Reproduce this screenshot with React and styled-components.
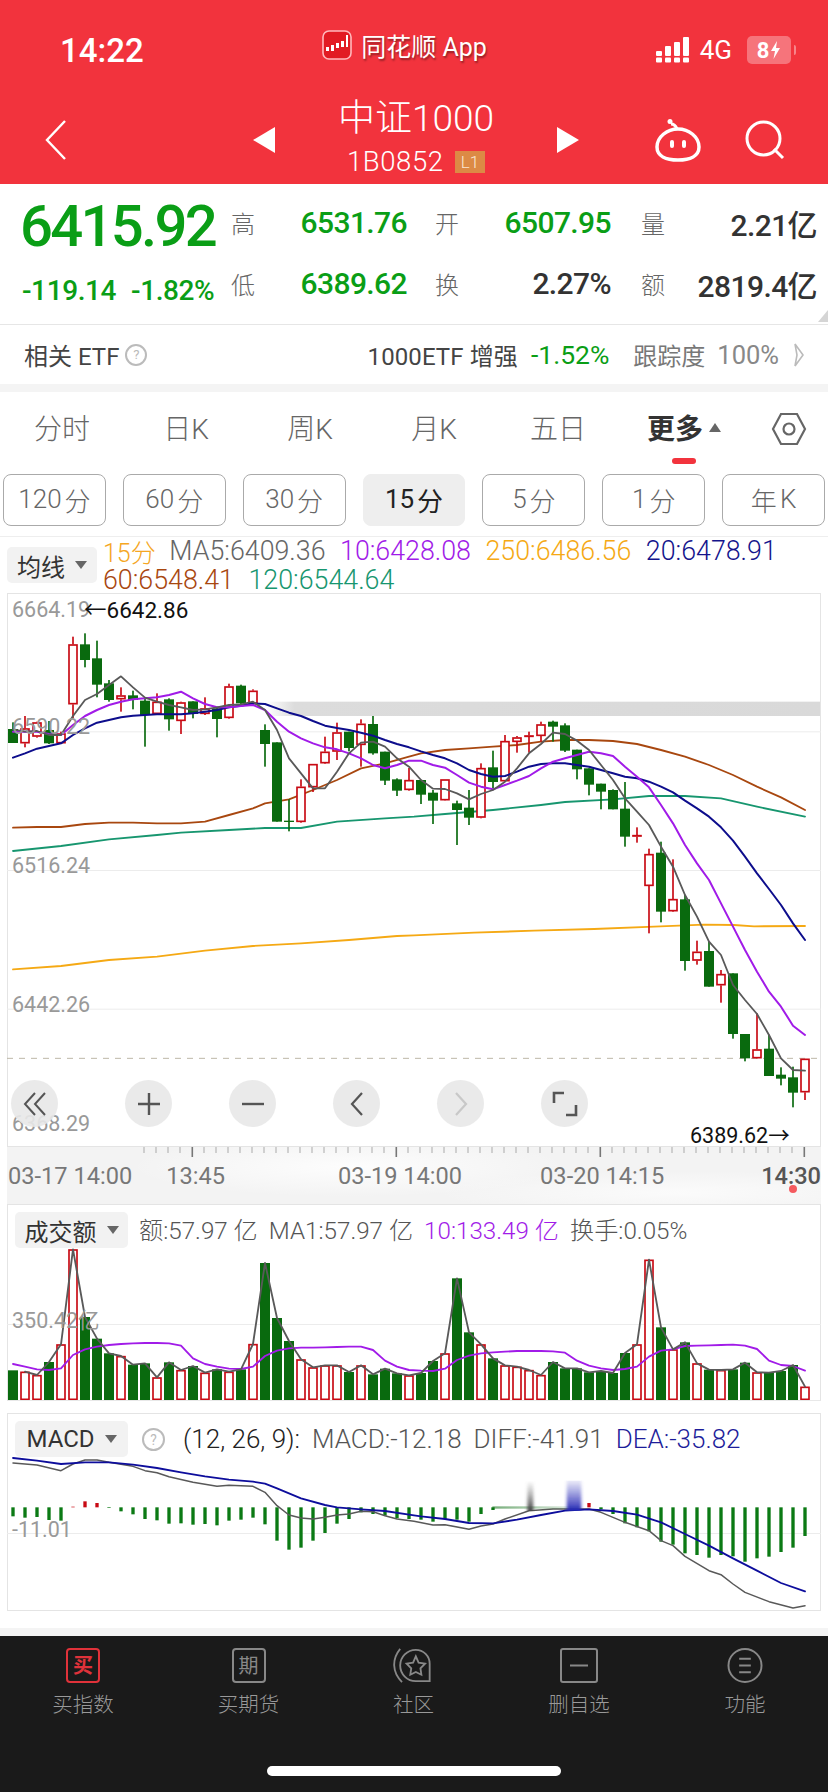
import React from "react";
import styled, { createGlobalStyle } from "styled-components";

const FONT = `Roboto, "Noto Sans CJK SC", sans-serif`;
const RED = "#f2333d";
const UP = "#0a9e16";

const Global = createGlobalStyle`
  html, body { margin: 0; padding: 0; background: #fff; }
  body { font-family: ${FONT}; }
  * { box-sizing: border-box; }
`;

/* ---------- data, in chart coordinates (3 units per pixel) ---------- */
const cx = (i) => 39 + 36 * i;
const candles = [
  ["g",397,417,459,459],["r",378,415,460,472],["r",395,397,440,443],["g",393,420,460,462],["r",425,430,460,462],
  ["r",140,163,343,385],["g",130,163,210,232],["g",152,205,284,322],["g",270,280,330,335],["r",292,316,328,365],
  ["g",302,316,330,358],["g",325,332,375,470],["r",310,335,372,375],["g",325,328,388,422],["r",335,337,393,432],
  ["g",334,334,372,385],["r",322,355,372,375],["g",352,355,387,442],["r",281,289,384,386],["g",284,287,340,345],
  ["r",298,302,342,345],["g",403,420,462,530],["g",457,457,695,695],["g",628,692,696,724],["r",568,590,696,698],
  ["r",522,522,592,606],["r",440,485,520,522],["r",398,427,485,510],["g",425,425,474,484],["r",388,401,465,530],
  ["g",378,402,490,494],["g",485,485,572,585],["g",565,568,602,618],["r",534,570,600,602],["g",570,570,614,642],
  ["g",600,608,632,702],["r",568,568,631,632],["g",632,640,660,765],["g",600,653,683,705],["r",520,534,683,685],
  ["g",482,532,576,596],["r",435,453,574,576],["r",438,442,456,488],["r",425,436,441,488],["r",395,403,438,455],
  ["g",392,395,410,455],["g",400,406,482,486],["g",479,479,538,568],["g",535,535,584,616],["g",581,581,605,658],
  ["g",598,600,658,658],["g",576,656,740,770],["r",712,735,740,758],["r",776,792,888,1030],["g",755,788,965,997],
  ["r",808,927,964,966],["g",915,928,1113,1142],["r",1052,1085,1112,1124],["g",1055,1083,1190,1190],["r",1140,1152,1186,1238],
  ["g",1150,1150,1332,1346],["g",1332,1332,1405,1414],["r",1270,1378,1405,1406],["g",1334,1376,1458,1458],["g",1432,1454,1466,1486],
  ["g",1430,1462,1508,1552],["r",1406,1406,1507,1530],
];
const byIndex = (ys) => ys.map((y, i) => [cx(i), y]);
const ma5 = byIndex([418,425,423,435,435,378,330,312,285,259,292,323,335,345,352,360,358,352,345,343,335,360,420,505,550,595,595,545,490,458,455,470,505,530,570,596,597,610,628,612,600,575,535,490,462,428,432,452,480,525,570,625,665,705,770,830,915,980,1055,1095,1185,1230,1272,1335,1405,1440,1442]);
const ma10 = byIndex([425,425,425,432,435,405,378,360,345,335,328,325,322,315,305,325,342,352,352,348,345,360,395,425,445,460,472,478,490,505,525,535,525,512,512,525,533,555,578,590,598,585,572,558,535,515,505,495,485,490,498,530,560,592,645,700,765,820,870,940,1010,1080,1145,1205,1250,1307,1335]);
const ma20 = byIndex([503,490,476,468,460,435,415,398,390,382,377,375,373,373,373,370,365,360,352,347,340,342,355,368,378,393,407,414,420,428,437,450,462,472,484,495,505,520,540,552,560,558,545,530,522,520,520,525,530,540,550,560,565,575,590,607,632,655,680,712,752,800,850,897,945,1000,1050]);
const R = 1242;
const ma60 = [[39,713],[111,711],[183,711],[255,702],[327,698],[399,698],[471,700],[543,700],[615,695],[687,675],[759,655],[795,640],[867,628],[939,600],[1011,570],[1083,535],[1155,520],[1227,500],[R+21,490],[R+93,480],[R+165,475],[R+237,470],[R+309,465],[R+381,455],[R+453,450],[R+525,450],[R+597,453],[R+669,462],[R+741,480],[R+813,500],[R+885,525],[R+957,555],[R+1029,590],[R+1101,622],[R+1173,660]];
const ma120 = [[39,783],[183,768],[327,748],[471,735],[543,728],[687,720],[795,714],[903,714],[1011,695],[1155,685],[1242,680],[R+93,672],[R+237,660],[R+381,645],[R+453,636],[R+597,628],[R+705,618],[R+813,618],[R+921,625],[R+1029,650],[R+1173,680]];
const ma250 = [[39,1138],[183,1128],[327,1110],[471,1100],[615,1082],[759,1068],[903,1060],[1047,1050],[1191,1038],[1242,1036],[R+180,1028],[R+360,1022],[R+540,1017],[R+720,1010],[R+870,1004],[R+960,1005],[R+1020,1009],[R+1173,1008]];

const volume = [
  ["g",541],["r",545],["r",555],["g",516],["r",463],["r",178],["g",381],["g",446],["g",490],["r",498],["g",524],["g",520],["r",562],["g",517],["r",540],["g",528],["r",548],["g",538],["r",545],["g",538],["r",462],["g",219],["g",384],["g",453],["r",508],["r",532],["r",526],["r",526],["g",546],["r",526],["g",553],["g",536],["g",550],["r",556],
  ["g",549],["g",513],["r",490],["g",265],["g",427],["r",463],["g",505],["r",526],["r",530],["r",540],["r",555],["g",516],["g",535],["g",535],["g",547],["g",543],["g",549],["g",489],["r",463],["r",209],["g",412],["r",478],["g",457],["r",520],["g",539],["r",540],["g",538],["g",518],["r",547],["g",548],["g",543],["g",525],["r",590],
];
const volMa1 = volume.map(([, y], i) => [cx(i), y]).slice(1);
const volMa10 = byIndex([522,530,538,540,535,495,478,470,465,462,460,459,459,460,467,505,522,530,536,537,530,498,482,475,473,473,472,471,470,470,480,512,530,540,542,543,536,510,497,490,487,485,483,483,483,484,488,512,527,535,540,537,530,500,482,478,468,467,466,465,464,467,477,512,525,528,542]);

const macdBars = [352,356,354,363,365,323,307,312,327,337,346,360,364,374,373,377,375,379,365,362,356,376,425,452,446,425,402,374,360,340,345,350,358,360,362,368,360,362,368,345,333,null,null,null,null,null,null,null,312,331,345,373,385,397,428,437,463,468,476,468,472,488,478,473,459,446,411];
const dea = [[39,177],[111,185],[183,195],[255,190],[327,190],[399,197],[471,207],[543,220],[615,232],[687,242],[759,248],[795,254],[831,268],[903,298],[975,318],[1011,325],[1083,331],[1155,336],[1242,349],[R+21,352],[R+93,360],[R+165,372],[R+237,373],[R+309,362],[R+381,348],[R+453,335],[R+525,331],[R+597,336],[R+669,347],[R+741,370],[R+813,405],[R+885,440],[R+957,478],[R+1029,515],[R+1101,552],[R+1173,577]];
const diff = [[39,192],[111,198],[183,215],[219,195],[255,183],[291,183],[327,190],[399,202],[435,215],[471,221],[507,233],[579,250],[651,262],[687,259],[759,262],[795,280],[831,320],[867,348],[903,357],[939,360],[975,355],[1011,348],[1047,345],[1083,337],[1119,338],[1155,350],[1191,360],[1242,367],[R+57,378],[R+93,377],[R+165,391],[R+201,381],[R+237,375],[R+273,360],[R+345,335],[R+417,330],[R+525,330],[R+561,340],[R+633,370],[R+705,395],[R+741,425],[R+777,440],[R+813,472],[R+885,515],[R+921,527],[R+957,555],[R+993,580],[R+1065,608],[R+1137,627],[R+1173,620]];

const ticks = Array.from({ length: 56 }, (_, i) => 144 + 12 * i);
const MAJOR = [192, 396, 600, 804];

/* ---------- page ---------- */
const Page = styled.div`
  width: 828px; height: 1792px; overflow: hidden;
  display: flex; flex-direction: column;
  background: #fff; font-family: ${FONT};
`;
const Header = styled.header`
  height: 184px; background: ${RED}; color: #fff;
  display: flex; flex-direction: column;
`;
const StatusBar = styled.div`
  height: 96px; padding: 4px 37px 0 60px;
  display: grid; grid-template-columns: 1fr auto 1fr; align-items: center;
`;
const Clock = styled.div`font-size: 33px; font-weight: 500;`;
const AppBadge = styled.div`
  display: flex; align-items: center; gap: 9px; margin: -11px 0 0 -42px;
  font-size: 25px; text-shadow: 1px 2px 2px rgba(0,0,0,.4);
`;
const StatusRight = styled.div`
  display: flex; align-items: center; justify-content: flex-end; gap: 11px;
  font-size: 26px;
`;
const Battery = styled.div`
  width: 44px; height: 28px; margin-left: 4px; border-radius: 5px;
  background: rgba(255,255,255,.32); position: relative;
  display: flex; align-items: center; justify-content: center; gap: 1px;
  font-size: 22px; font-weight: 700;
  &::after {
    content: ""; position: absolute; right: -5px; top: 9px;
    width: 2px; height: 10px; border-radius: 0 2px 2px 0;
    background: rgba(255,255,255,.4);
  }
`;
const NavBar = styled.div`
  height: 88px; position: relative; padding: 0 43px 0 45px;
  display: flex; align-items: center;
`;
const Title = styled.div`
  width: 326px; margin-left: 186px; margin-right: 76px;
  display: flex; align-items: center; justify-content: space-between;
`;
const TitleText = styled.div`
  display: flex; flex-direction: column; align-items: center; margin-top: -13px;
`;
const Name = styled.div`font-size: 37px; line-height: 56px; font-weight: 300;`;
const Code = styled.div`
  display: flex; align-items: center; gap: 11px;
  font-size: 27.5px; line-height: 30px; font-weight: 300; letter-spacing: .6px;
`;
const Level = styled.span`
  background: #dc8a45; color: #fbe6d3; font-size: 17px; line-height: 22px;
  padding: 0 6px; letter-spacing: 0;
`;
const NavIcons = styled.div`display: flex; align-items: center; gap: 44px;`;

/* quote */
const Quote = styled.section`
  height: 140px; padding: 8px 11px 0 22px; position: relative;
  display: grid; grid-template-columns: 209px 1fr;
`;
const PriceCol = styled.div`display: flex; flex-direction: column; margin-left: -2px;`;
const Price = styled.div`
  font-size: 58px; line-height: 68px; font-weight: 500; color: ${UP};
  letter-spacing: -2.7px; white-space: nowrap;
`;
const Change = styled.div`
  display: flex; gap: 15px; margin-top: 14px; margin-left: 2px; white-space: nowrap;
  font-size: 28px; line-height: 34px; font-weight: 500; color: ${UP};
  letter-spacing: -.4px;
`;
const StatGrid = styled.div`
  display: grid; height: 122px;
  grid-template-columns: 30px 146px 28px 30px 146px 30px 30px 146px;
  grid-auto-rows: 61px; align-items: center;
`;
const StatLabel = styled.div`
  font-size: 24px; color: #666; font-weight: 300;
  grid-column: ${(p) => p.$col};
`;
const StatValue = styled.div`
  text-align: right; font-size: 30px; font-weight: 500; letter-spacing: -.6px;
  color: ${(p) => (p.$up ? UP : "#333")}; white-space: nowrap;
`;
const CornerMark = styled.div`
  position: absolute; right: 0; bottom: 0; width: 0; height: 0;
  border-left: 10px solid transparent; border-bottom: 12px solid #d5d5d5;
  margin-bottom: 2px;
`;
const EtfRow = styled.section`
  height: 60px; border-top: 1px solid #e6e6e6; padding: 0 23px 0 24px;
  display: flex; align-items: center; font-size: 24px; color: #444;
`;
const HelpBadge = styled.span`
  width: ${(p) => p.$size}px; height: ${(p) => p.$size}px; border-radius: 50%;
  border: 2px solid #bbb; color: #bbb; font-size: ${(p) => p.$size * 0.6}px;
  display: inline-flex; align-items: center; justify-content: center; flex: none;
  margin-left: ${(p) => p.$ml}px; margin-top: ${(p) => p.$mt || 0}px;
`;
const EtfName = styled.span`margin-left: auto; letter-spacing: .1px;`;
const EtfPct = styled.span`margin-left: 13px; color: ${UP}; font-size: 26.5px;`;
const EtfLabel = styled.span`margin-left: 24px; color: #777;`;
const EtfValue = styled.span`margin-left: 12px; color: #888; font-size: 25.5px; margin-right: 14px;`;
const Gap = styled.div`height: ${(p) => p.$h}px; background: ${(p) => p.$bg || "#f4f4f4"}; flex: none;`;

/* tabs */
const Tabs = styled.nav`
  height: 74px; display: grid; grid-template-columns: repeat(6, 124px) 84px;
  align-items: center;
`;
const Tab = styled.div`
  position: relative; height: 74px; padding-bottom: 4px;
  display: flex; align-items: center; justify-content: center; gap: 6px;
  font-size: 28px; font-weight: ${(p) => (p.$active ? 700 : 300)};
  color: ${(p) => (p.$active ? "#333" : "#666")};
`;
const ActiveTabText = styled.span`margin-left: 4px;`;
const TabMark = styled.i`
  position: absolute; left: 50%; bottom: 2px; width: 24px; height: 6px;
  margin-left: -10px; border-radius: 3px; background: ${RED};
`;
const UpTri = styled.i`
  width: 0; height: 0; border: 6.5px solid transparent; border-top: 0;
  border-bottom: 9px solid #666;
`;
const HexIcon = styled.svg`display: block; margin: 4px 0 0 6px;`;
const Periods = styled.div`
  display: flex; gap: 17px; padding: 0 3px; margin-top: 8px;
  padding-bottom: 10px; border-bottom: 1px solid #eee;
`;
const Period = styled.div`
  width: 103.5px; height: 52px; border-radius: 8px;
  border: 1px solid ${(p) => (p.$active ? "#eee" : "#aaa")};
  background: ${(p) => (p.$active ? "#eee" : "#fff")};
  color: ${(p) => (p.$active ? "#222" : "#666")};
  display: flex; align-items: center; justify-content: center; gap: 3px; padding-bottom: 2px;
  font-size: 26px; font-weight: ${(p) => (p.$active ? 400 : 300)};
`;
const LegendRow = styled.div`
  height: 56px; padding: 0 7px; display: flex; align-items: flex-start; gap: 6px;
`;
const Selector = styled.div`
  width: ${(p) => p.$w}px; height: 36px; margin-top: ${(p) => p.$mt}px; flex: none;
  background: #f2f2f2; border-radius: 5px; color: #333; font-size: 24px;
  display: flex; align-items: center; justify-content: center; gap: 10px;
`;
const DownTri = styled.i`
  width: 0; height: 0; border: 6.5px solid transparent; border-bottom: 0;
  border-top: 8px solid #666;
`;
const LegendLines = styled.div`display: flex; flex-direction: column; margin-top: -1px;`;
const LegendLine = styled.div`
  height: 29px; display: flex; align-items: center; gap: 14.5px;
  font-size: 26.8px; white-space: nowrap; font-weight: 300;
`;
const Val = styled.span`color: ${(p) => p.$c};`;
const Period15 = styled(Val)`font-size: 25px; margin-right: -1px;`;

/* panels */
const Panel = styled.div`
  position: relative; margin: 0 7px; height: ${(p) => p.$h}px; flex: none;
  border: 1px solid #e4e4e4; border-bottom-color: ${(p) => p.$bb || "#e4e4e4"};
`;
const ChartSvg = styled.svg`
  display: block; position: absolute; left: -1px; top: ${(p) => p.$top}px;
  width: 814px; height: ${(p) => p.$h}px;
`;
const AxisLabel = styled.span`
  position: absolute; left: ${(p) => p.$x}px; top: ${(p) => p.$y}px;
  font-size: ${(p) => p.$fs || 21.5}px; line-height: 26px; color: ${(p) => p.$c || "#999"};
  white-space: nowrap;
`;
const Controls = styled.div`
  position: absolute; left: 3px; top: 486px; display: flex; gap: 57px;
`;
const Round = styled.div`
  width: 47px; height: 47px; border-radius: 50%; background: rgba(232,232,232,.9);
  margin-right: ${(p) => p.$mr || 0}px;
  display: flex; align-items: center; justify-content: center;
`;
const TimeAxis = styled.div`
  position: relative; margin: 0 7px; height: 57px; flex: none; padding: 14px 0 0 1px;
  background: radial-gradient(ellipse 220px 30px at 42% 35%, #fdfdfd, rgba(253,253,253,0)),
              radial-gradient(ellipse 240px 22px at 82% 80%, #fbfbfb, rgba(253,253,253,0)), #f3f3f3;
  display: flex; align-items: flex-start;
  font-size: 23.6px; line-height: 30px; color: #777; font-weight: 400;
`;
const TimeTicks = styled.svg`position: absolute; left: 0; top: 0; width: 814px; height: 12px;`;
const TimeLabel = styled.span`
  margin-left: ${(p) => p.$ml};
  color: ${(p) => (p.$strong ? "#555" : "#777")}; white-space: nowrap;
  font-weight: ${(p) => (p.$strong ? 500 : 400)};
`;
const LiveDot = styled.i`
  position: absolute; left: 782px; top: 38px; width: 8px; height: 8px;
  border-radius: 50%; background: #f55a5f;
`;
const PanelHead = styled.div`
  position: relative; z-index: 1; height: 43px; padding: 7px 0 0 7px;
  display: flex; align-items: flex-start;
`;
const HeadText = styled.div`
  display: flex; align-items: center; height: ${(p) => p.$h || 36}px; gap: ${(p) => p.$gap}px;
  margin-left: ${(p) => p.$ml}px;
  font-size: ${(p) => p.$fs}px; white-space: nowrap; font-weight: 300; color: #555;
`;

/* bottom nav */
const BottomNav = styled.footer`
  flex: none; height: 156px; background: #1a1a1a; position: relative;
  display: grid; grid-template-columns: 166px 165px 165px 166px 166px;
  padding-top: 12px; align-items: start;
`;
const NavItem = styled.div`
  display: flex; flex-direction: column; align-items: center; gap: 7px;
  font-size: 20.5px; line-height: 30px; color: #999; font-weight: 300;
`;
const NavIconBox = styled.div`
  width: 34px; height: 35px; border: 2px solid ${(p) => p.$c}; border-radius: 4px;
  color: ${(p) => p.$c}; font-size: 20px; font-weight: ${(p) => p.$w || 400};
  display: flex; align-items: center; justify-content: center;
`;
const IconSvg = styled.svg`display: block; flex: none;`;
const HomeBar = styled.div`
  position: absolute; left: 267px; top: 130px; width: 294px; height: 10px;
  border-radius: 5px; background: #fff;
`;

const pts = (a) => a.map((p) => p.join(",")).join(" ");
const Line = ({ d, c, w = 5.5 }) => (
  <polyline points={pts(d)} fill="none" stroke={c} strokeWidth={w} strokeLinejoin="round" strokeLinecap="round" />
);
const G = "#096a0e";
const RC = "#c80a14";

function Candle({ c, i }) {
  const [t, wt, bt, bb, wb] = c;
  const x = cx(i);
  if (t === "g") {
    return (
      <g fill={G}>
        <rect x={x - 2.5} y={wt} width={5} height={wb - wt} />
        <rect x={x - 15} y={bt} width={30} height={bb - bt} />
      </g>
    );
  }
  return (
    <g>
      <rect x={x - 2.5} y={wt} width={5} height={bt - wt} fill={RC} />
      <rect x={x - 2.5} y={bb} width={5} height={wb - bb} fill={RC} />
      <rect x={x - 12} y={bt + 2} width={24} height={Math.max(bb - bt - 4, 1)} fill="#fff" stroke={RC} strokeWidth={5} />
    </g>
  );
}

const MainChart = () => (
  <ChartSvg $top={-1} $h={554} viewBox="21 9 2442 1662" preserveAspectRatio="none">
    <defs>
      <linearGradient id="band"><stop offset="0" stopColor="#dcdcdc" stopOpacity="0" /><stop offset=".05" stopColor="#dcdcdc" /><stop offset="1" stopColor="#d9d9d9" /></linearGradient>
    </defs>
    <rect x="800" y="335" width="1660" height="43" fill="url(#band)" />
    {[425, 841, 1257].map((y) => <rect key={y} x="21" y={y - 1} width="2442" height="3" fill="#ececec" />)}
    <line x1="21" y1="1405" x2="2463" y2="1405" stroke="#bdb7a8" strokeWidth="3" strokeDasharray="18 18" />
    <Line d={ma120} c="#17966f" />
    <Line d={ma60} c="#a8470f" />
    <Line d={ma250} c="#f5a914" />
    {candles.map((c, i) => <Candle key={i} c={c} i={i} />)}
    <Line d={ma20} c="#0d0d8c" w={6} />
    <Line d={ma10} c="#a11be8" w={6} />
    <Line d={ma5} c="#595959" />
  </ChartSvg>
);

const VolumeChart = () => (
  <ChartSvg $top={42} $h={153} viewBox="21 171 2442 459" preserveAspectRatio="none">
    <rect x="21" y="402" width="2442" height="3" fill="#ececec" />
    {volume.map(([t, y], i) =>
      t === "g"
        ? <rect key={i} x={cx(i) - 15} y={y} width={30} height={630 - y} fill={G} />
        : <rect key={i} x={cx(i) - 12} y={y + 2} width={24} height={626 - y} fill="#fff" stroke={RC} strokeWidth={5} />
    )}
    <Line d={volMa10} c="#a11be8" />
    <Line d={volMa1} c="#595959" />
  </ChartSvg>
);

const MacdChart = () => (
  <ChartSvg $top={42} $h={154} viewBox="21 171 2442 462" preserveAspectRatio="none">
    <defs>
      <linearGradient id="smearG" x1="0" y1="0" x2="0" y2="1"><stop offset="0" stopColor="#777" stopOpacity="0" /><stop offset="1" stopColor="#444" /></linearGradient>
      <linearGradient id="smearB" x1="0" y1="0" x2="0" y2="1"><stop offset="0" stopColor="#4a4dc4" stopOpacity=".12" /><stop offset="1" stopColor="#2528b4" /></linearGradient>
      <linearGradient id="smearL"><stop offset="0" stopColor="#0a6b10" stopOpacity=".55" /><stop offset="1" stopColor="#0a6b10" stopOpacity=".08" /></linearGradient>
      <filter id="soft" x="-60%" y="-10%" width="220%" height="120%"><feGaussianBlur stdDeviation="5 2" /></filter>
    </defs>
    <rect x="21" y="402" width="2442" height="3" fill="#ececec" />
    {macdBars.map((y, i) => {
      if (y === null) return null;
      const up = y < 325;
      return <rect key={i} x={cx(i) - 5} y={up ? y : 325} width={10} height={Math.abs(y - 325)} fill={up ? RC : "#0b7a14"} />;
    })}
    <Line d={diff} c="#595959" w={4.5} />
    <Line d={dea} c="#0d0d9c" />
    <rect x={R + 235} y="322" width="265" height="7" fill="url(#smearL)" />
    <rect x={R + 340} y="245" width="18" height="90" fill="url(#smearG)" filter="url(#soft)" />
    <rect x={R + 458} y="245" width="44" height="90" fill="url(#smearB)" filter="url(#soft)" />
  </ChartSvg>
);

const PERIODS = [["120", "分"], ["60", "分"], ["30", "分"], ["15", "分", true], ["5", "分"], ["1", "分"], ["年", "K"]];

export default function App() {
  return (
    <Page>
      <Global />
      <Header>
        <StatusBar>
          <Clock>14:22</Clock>
          <AppBadge>
            <IconSvg width="30" height="30" viewBox="0 0 30 30">
              <rect x="1" y="1" width="28" height="28" rx="6" fill="#e21b23" stroke="#ffb9bc" strokeWidth="1.6" />
              <g fill="#fff">
                <rect x="4" y="17" width="3" height="4" /><rect x="9" y="15" width="3" height="6" />
                <rect x="14" y="13" width="3" height="5" /><rect x="19" y="11" width="3" height="6" />
                <rect x="24" y="5" width="2" height="12" />
              </g>
            </IconSvg>
            <span>同花顺 App</span>
          </AppBadge>
          <StatusRight>
            <IconSvg width="33" height="26" viewBox="0 0 33 26" fill="#fff">
              <rect x="0" y="14" width="6" height="5" rx="1" /><rect x="0" y="20.5" width="6" height="5" rx="1" />
              <rect x="9" y="9" width="6" height="10" rx="1" /><rect x="9" y="20.5" width="6" height="5" rx="1" />
              <rect x="18" y="5" width="6" height="14" rx="1" /><rect x="18" y="20.5" width="6" height="5" rx="1" />
              <rect x="27" y="0" width="6" height="19" rx="1" /><rect x="27" y="20.5" width="6" height="5" rx="1" />
            </IconSvg>
            <span>4G</span>
            <Battery>
              <span>8</span>
              <IconSvg width="11" height="18" viewBox="0 0 11 18"><path d="M7 0 L1 10 H5 L3.500 18 L10 7 H6 Z" fill="#fff" /></IconSvg>
            </Battery>
          </StatusRight>
        </StatusBar>
        <NavBar>
          <IconSvg width="22" height="40" viewBox="0 0 22 40"><path d="M20 1 L2 20 L20 39" fill="none" stroke="#fff" strokeWidth="2.4" /></IconSvg>
          <Title>
            <IconSvg width="22" height="26" viewBox="0 0 22 26"><path d="M22 0 V26 L0 13 Z" fill="#fff" /></IconSvg>
            <TitleText>
              <Name>中证1000</Name>
              <Code>1B0852<Level>L1</Level></Code>
            </TitleText>
            <IconSvg width="22" height="26" viewBox="0 0 22 26"><path d="M0 0 V26 L22 13 Z" fill="#fff" /></IconSvg>
          </Title>
          <NavIcons>
            <IconSvg width="46" height="44" viewBox="0 0 46 44">
              <circle cx="15" cy="3.500" r="2.500" fill="#fff" />
              <path d="M16 6 Q20 6 22 11" fill="none" stroke="#fff" strokeWidth="3" />
              <path d="M23 11 C34 11 44 19 44 29 C44 38 35 42 23 42 C11 42 2 38 2 29 C2 19 12 11 23 11 Z" fill="none" stroke="#fff" strokeWidth="3.500" />
              <rect x="15" y="22" width="4" height="8" rx="2" fill="#fff" /><rect x="27" y="22" width="4" height="8" rx="2" fill="#fff" />
            </IconSvg>
            <IconSvg width="40" height="40" viewBox="0 0 40 40">
              <circle cx="18.500" cy="18.500" r="16.500" fill="none" stroke="#fff" strokeWidth="3" />
              <path d="M29 29 L38 38" stroke="#fff" strokeWidth="3" />
            </IconSvg>
          </NavIcons>
        </NavBar>
      </Header>

      <Quote>
        <PriceCol>
          <Price>6415.92</Price>
          <Change><span>-119.14</span><span>-1.82%</span></Change>
        </PriceCol>
        <StatGrid>
          <StatLabel $col={1}>高</StatLabel><StatValue $up>6531.76</StatValue>
          <StatLabel $col={4}>开</StatLabel><StatValue $up>6507.95</StatValue>
          <StatLabel $col={7}>量</StatLabel><StatValue>2.21亿</StatValue>
          <StatLabel $col={1}>低</StatLabel><StatValue $up>6389.62</StatValue>
          <StatLabel $col={4}>换</StatLabel><StatValue>2.27%</StatValue>
          <StatLabel $col={7}>额</StatLabel><StatValue>2819.4亿</StatValue>
        </StatGrid>
        <CornerMark />
      </Quote>
      <EtfRow>
        <span>相关 ETF</span>
        <HelpBadge $size={22} $ml={6}>?</HelpBadge>
        <EtfName>1000ETF 增强</EtfName>
        <EtfPct>-1.52%</EtfPct>
        <EtfLabel>跟踪度</EtfLabel>
        <EtfValue>100%</EtfValue>
        <IconSvg width="12" height="24" viewBox="0 0 12 24"><path d="M2 1 L10 12 L2 23 L4 12 Z" fill="none" stroke="#bbb" strokeWidth="1.600" /></IconSvg>
      </EtfRow>
      <Gap $h={8} />

      <Tabs>
        {["分时", "日K", "周K", "月K", "五日"].map((t) => <Tab key={t}>{t}</Tab>)}
        <Tab $active><ActiveTabText>更多</ActiveTabText><UpTri /><TabMark /></Tab>
        <Tab>
          <HexIcon width="36" height="36" viewBox="0 0 36 36">
            <path d="M10 3 H26 L34 18 L26 33 H10 L2 18 Z" fill="none" stroke="#666" strokeWidth="2.200" />
            <circle cx="18" cy="18" r="5.500" fill="none" stroke="#666" strokeWidth="2.200" />
          </HexIcon>
        </Tab>
      </Tabs>
      <Periods>
        {PERIODS.map(([a, b, active]) => <Period key={a} $active={active}>{a}<span>{b}</span></Period>)}
      </Periods>
      <LegendRow>
        <Selector $w={90} $mt={10}>均线<DownTri /></Selector>
        <LegendLines>
          <LegendLine>
            <Period15 $c="#f5a623">15分</Period15><Val $c="#666">MA5:6409.36</Val><Val $c="#a11be8">10:6428.08</Val>
            <Val $c="#f5a914">250:6486.56</Val><Val $c="#14148c">20:6478.91</Val>
          </LegendLine>
          <LegendLine>
            <Val $c="#a8470f">60:6548.41</Val><Val $c="#17966f">120:6544.64</Val>
          </LegendLine>
        </LegendLines>
      </LegendRow>

      <Panel $h={554}>
        <MainChart />
        <AxisLabel $x={4} $y={3}>6664.19</AxisLabel>
        <AxisLabel $x={76} $y={3} $c="#111" $fs={22.5}>←6642.86</AxisLabel>
        <AxisLabel $x={4} $y={120}>6590.22</AxisLabel>
        <AxisLabel $x={4} $y={259}>6516.24</AxisLabel>
        <AxisLabel $x={4} $y={398}>6442.26</AxisLabel>
        <AxisLabel $x={4} $y={517}>6368.29</AxisLabel>
        <AxisLabel $x={682} $y={529} $c="#111">6389.62→</AxisLabel>
        <Controls>
          <Round $mr={10}>
            <IconSvg width="24" height="24" viewBox="0 0 24 24"><path d="M12 1 L2 12 L12 23 M22 1 L12 12 L22 23" fill="none" stroke="#555" strokeWidth="2" /></IconSvg>
          </Round>
          <Round>
            <IconSvg width="24" height="24" viewBox="0 0 24 24"><path d="M12 1 V23 M1 12 H23" fill="none" stroke="#555" strokeWidth="2.400" /></IconSvg>
          </Round>
          <Round>
            <IconSvg width="24" height="4" viewBox="0 0 24 4"><path d="M1 2 H23" stroke="#555" strokeWidth="2.400" /></IconSvg>
          </Round>
          <Round>
            <IconSvg width="14" height="24" viewBox="0 0 14 24"><path d="M12 1 L2 12 L12 23" fill="none" stroke="#555" strokeWidth="2.200" /></IconSvg>
          </Round>
          <Round>
            <IconSvg width="14" height="24" viewBox="0 0 14 24"><path d="M2 1 L12 12 L2 23" fill="none" stroke="#c8c8c8" strokeWidth="2.200" /></IconSvg>
          </Round>
          <Round>
            <IconSvg width="26" height="26" viewBox="0 0 26 26"><path d="M12 2 H2 V12 M14 24 H24 V14" fill="none" stroke="#555" strokeWidth="2.600" /></IconSvg>
          </Round>
        </Controls>
      </Panel>
      <TimeAxis>
        <TimeTicks viewBox="0 0 814 12">
          {ticks.map((x) => {
            const major = MAJOR.includes(x);
            return <rect key={x} x={x - 7.5} y="0" width={major ? 1.6 : 1} height={major ? 10 : 6} fill={major ? "#777" : "#aaa"} />;
          })}
        </TimeTicks>
        <TimeLabel $ml="0">03-17 14:00</TimeLabel>
        <TimeLabel $ml="34px">13:45</TimeLabel>
        <TimeLabel $ml="113px">03-19 14:00</TimeLabel>
        <TimeLabel $ml="78px">03-20 14:15</TimeLabel>
        <TimeLabel $ml="auto" $strong>14:30</TimeLabel>
        <LiveDot />
      </TimeAxis>

      <Panel $h={197} $bb="#e8e8e8">
        <VolumeChart />
        <PanelHead>
          <Selector $w={113} $mt={0}>成交额<DownTri /></Selector>
          <HeadText $ml={11} $gap={11} $fs={24.2} $h={32}>
            <span>额:57.97 亿</span><span>MA1:57.97 亿</span><Val $c="#a11be8">10:133.49 亿</Val><span>换手:0.05%</span>
          </HeadText>
        </PanelHead>
        <AxisLabel $x={4} $y={103}>350.42亿</AxisLabel>
      </Panel>
      <Gap $h={12} $bg="#fff" />

      <Panel $h={198}>
        <MacdChart />
        <PanelHead>
          <Selector $w={113} $mt={0}>MACD<DownTri /></Selector>
          <HelpBadge $size={23} $ml={14} $mt={7}>?</HelpBadge>
          <HeadText $ml={18} $gap={12} $fs={26}>
            <Val $c="#222">(12, 26, 9):</Val><span>MACD:-12.18</span><span>DIFF:-41.91</span><Val $c="#1d1d9a">DEA:-35.82</Val>
          </HeadText>
        </PanelHead>
        <AxisLabel $x={4} $y={103}>-11.01</AxisLabel>
      </Panel>
      <Gap $h={17} $bg="#fff" />
      <Gap $h={8} />

      <BottomNav>
        <NavItem>
          <NavIconBox $c="#e0323a" $w={700}>买</NavIconBox>买指数
        </NavItem>
        <NavItem>
          <NavIconBox $c="#888">期</NavIconBox>买期货
        </NavItem>
        <NavItem>
          <IconSvg width="42" height="35" viewBox="0 0 44 38">
            <path d="M7 1 C-2 12 -2 26 9 37" fill="none" stroke="#888" strokeWidth="2" />
            <path d="M24 2 A15 15 0 0 1 39 17 V36 H24 A17 17 0 0 1 24 2 Z" fill="none" stroke="#888" strokeWidth="2" />
            <path d="M24 9 L27 16 L34 17 L29 22 L30 29 L24 26 L18 29 L19 22 L14 17 L21 16 Z" fill="none" stroke="#888" strokeWidth="2" />
          </IconSvg>
          社区
        </NavItem>
        <NavItem>
          <IconSvg width="38" height="35" viewBox="0 0 38 35">
            <rect x="1" y="1" width="36" height="33" rx="2" fill="none" stroke="#888" strokeWidth="2" />
            <path d="M10 17.500 H28" stroke="#888" strokeWidth="2" />
          </IconSvg>
          删自选
        </NavItem>
        <NavItem>
          <IconSvg width="36" height="35" viewBox="0 0 36 36">
            <circle cx="18" cy="18" r="17" fill="none" stroke="#888" strokeWidth="2" />
            <path d="M12 11 H24 M12 18 H24 M12 25 H24" stroke="#888" strokeWidth="2" />
          </IconSvg>
          功能
        </NavItem>
        <HomeBar />
      </BottomNav>
    </Page>
  );
}
